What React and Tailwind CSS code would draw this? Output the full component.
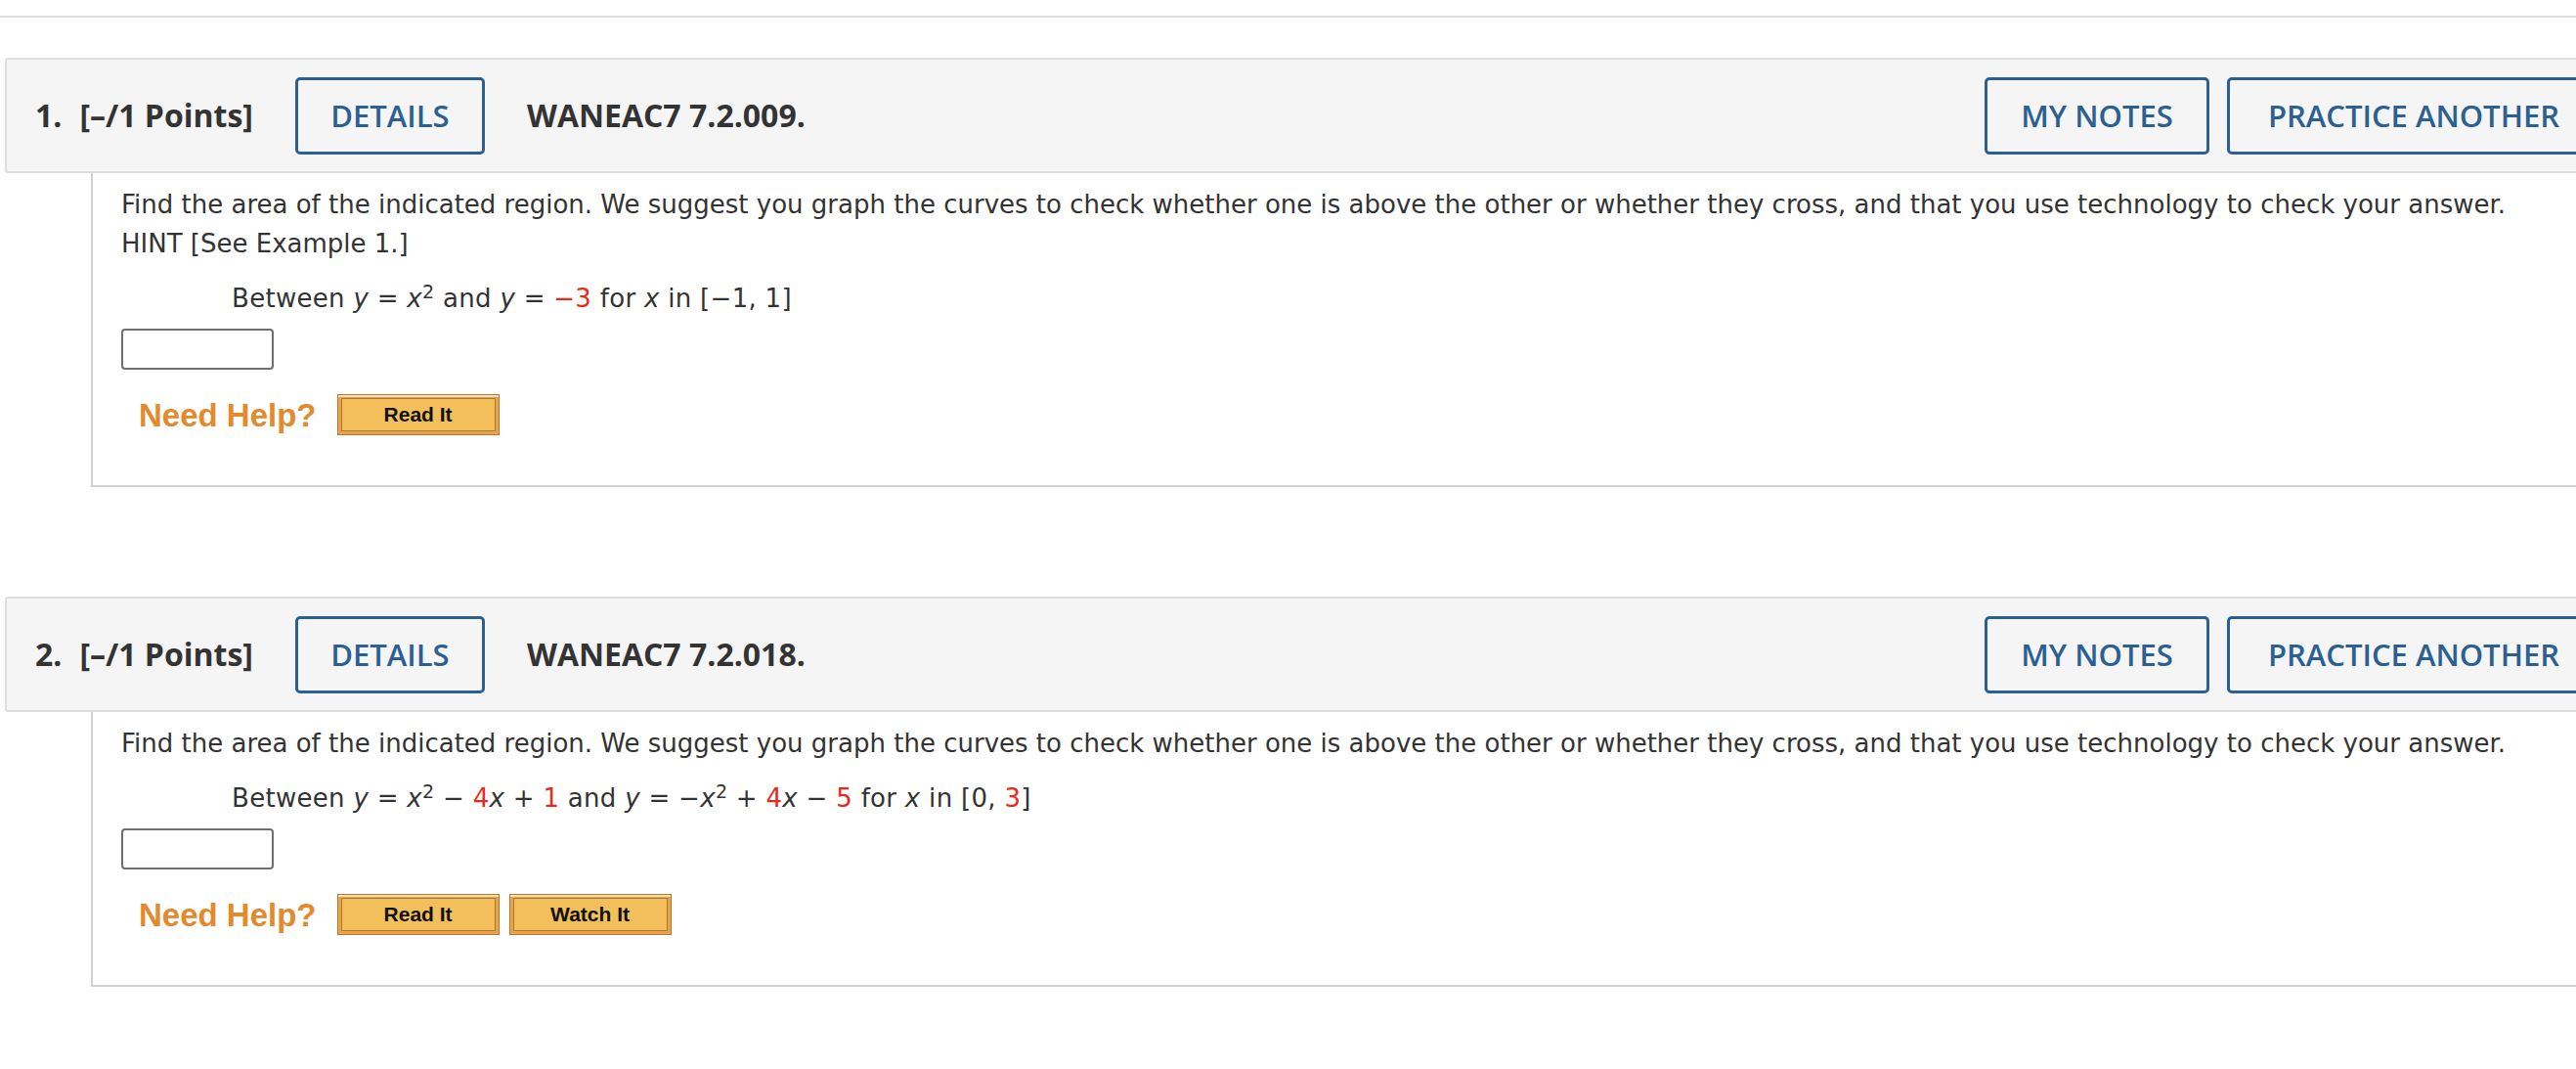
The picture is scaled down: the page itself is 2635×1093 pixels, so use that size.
const BLUE = 'border-[3px] border-[#2b6091] rounded-[5px] text-[#2b6091] h-[79px] flex items-center justify-center text-[31px] font-semibold';

function HelpButton({ label }) {
  return (
    <div className="w-[166px] h-[42px] border border-[#b8782e] bg-[#eea248] p-[3px] shadow-[inset_0_2px_0_#fbe2b8]">
      <div className="h-full border border-[#a7773c] bg-[#f2bf5b] flex items-center justify-center text-[21px] font-bold text-[#111] font-['Liberation_Sans',Arial,sans-serif]">
        {label}
      </div>
    </div>
  );
}

function R({ children }) {
  return <span className="text-[#e8291c]">{children}</span>;
}

function V({ children }) {
  return <i>{children}</i>;
}

function Question({ num, code, hint, formula, watch }) {
  return (
    <div>
      <div className="ml-[5px] w-[2677px] h-[118px] border-2 border-[#dedede] rounded-[3px] bg-[#f5f5f5] flex items-center pl-[29px] pr-[20px] font-['Open_Sans',sans-serif] text-[#333]">
        <span className="text-[32px] font-bold">{num}.</span>
        <span className="text-[32px] font-bold ml-[18px]">[–/1 Points]</span>
        <button className={`${BLUE} w-[194px] ml-[43px]`}>DETAILS</button>
        <span className="text-[32px] font-bold ml-[43px]">{code}</span>
        <div className="ml-auto flex gap-[18px]">
          <button className={`${BLUE} w-[230px]`}>MY NOTES</button>
          <button className={`${BLUE} w-[382px]`}>PRACTICE ANOTHER</button>
        </div>
      </div>
      <div className="ml-[93px] border-l-2 border-b-2 border-[#d0d0d0] pl-[29px] pt-[12px] pb-[51px] font-['DejaVu_Sans',Verdana,sans-serif] text-[26px] leading-[40px] text-[#333]">
        <p>
          Find the area of the indicated region. We suggest you graph the curves to check whether one is above the other or whether they cross, and that you use technology to check your answer.
        </p>
        {hint && <p>HINT [See Example 1.]</p>}
        <p className="mt-[16px] pl-[113px] tracking-[0.3px]">{formula}</p>
        <div className="mt-[11px] w-[156px] h-[42px] border-2 border-[#707070] rounded-[4px] bg-white" />
        <div className="mt-[25px] flex items-center">
          <span className="ml-[18px] text-[33px] font-bold text-[#e38a2c] font-['Liberation_Sans',Arial,sans-serif] leading-none">Need Help?</span>
          <div className="ml-[21px] flex gap-[10px]">
            <HelpButton label="Read It" />
            {watch && <HelpButton label="Watch It" />}
          </div>
        </div>
      </div>
    </div>
  );
}

export default function App() {
  return (
    <div className="w-full min-h-[1093px] bg-white overflow-hidden">
      <div className="w-[2700px]">
        <div className="h-[18px] border-b-2 border-[#dedede]" />
        <div className="mt-[41px]">
          <Question
            num={1}
            code="WANEAC7 7.2.009."
            hint
            formula={
              <>
                Between <V>y</V> = <V>x</V><sup className="text-[19px]">2</sup> and <V>y</V> = <R>−3</R> for <V>x</V> in [−1, 1]
              </>
            }
          />
        </div>
        <div className="mt-[112px]">
          <Question
            num={2}
            code="WANEAC7 7.2.018."
            watch
            formula={
              <>
                Between <V>y</V> = <V>x</V><sup className="text-[19px]">2</sup> − <R>4</R><V>x</V> + <R>1</R> and <V>y</V> = −<V>x</V><sup className="text-[19px]">2</sup> + <R>4</R><V>x</V> − <R>5</R> for <V>x</V> in [0, <R>3</R>]
              </>
            }
          />
        </div>
      </div>
    </div>
  );
}
